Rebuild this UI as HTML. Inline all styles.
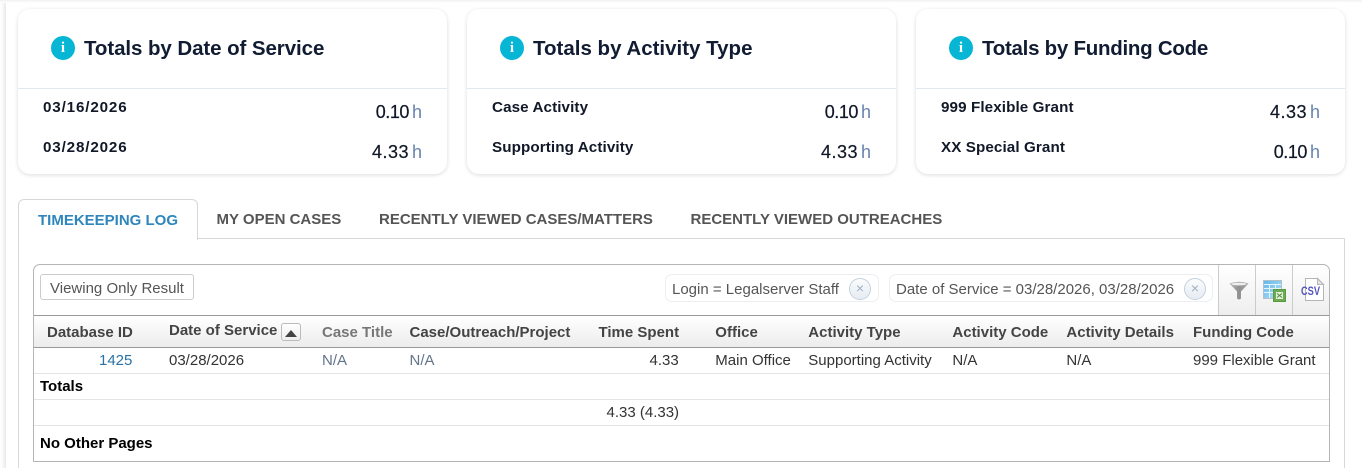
<!DOCTYPE html>
<html><head><meta charset="utf-8">
<style>
html,body{margin:0;padding:0;background:#fff;width:1362px;height:468px;overflow:hidden;}
body{position:relative;font-family:"Liberation Sans",sans-serif;}
.a{position:absolute;white-space:nowrap;}
.card{position:absolute;top:9px;width:429px;height:165px;background:#fff;border-radius:12px;box-shadow:0 1px 4px rgba(0,0,0,.14);}
.card .hr{position:absolute;left:0;right:0;top:79px;height:1px;background:#e2e8f0;}
.ic{position:absolute;left:33px;top:27px;width:24px;height:24px;border-radius:50%;background:#06b6d4;color:#fff;font:bold 15px/24px "Liberation Serif",serif;text-align:center;}
.t{position:absolute;left:66px;top:28px;font-size:20.5px;line-height:24px;font-weight:bold;color:#111c33;white-space:nowrap;}
.l{position:absolute;left:25px;font-size:15.2px;line-height:18px;font-weight:bold;color:#111827;white-space:nowrap;letter-spacing:.1px;}
.l.d{letter-spacing:.85px;}
.v{position:absolute;right:25px;font-size:18px;line-height:22px;color:#111827;white-space:nowrap;-webkit-text-stroke:.2px #111827;}
.v.z{letter-spacing:-.45px;}
.v.f{letter-spacing:.5px;}
.v span{color:#6583ab;margin-left:3px;-webkit-text-stroke:0;letter-spacing:0;}
.tab{position:absolute;top:211px;font-size:15px;line-height:18px;font-weight:bold;color:#555;white-space:nowrap;}
.th{position:absolute;top:324px;font-size:15px;line-height:17px;font-weight:bold;color:#444;white-space:nowrap;}
.td{position:absolute;top:352px;font-size:15px;line-height:17px;color:#333;white-space:nowrap;}
.hl{position:absolute;left:34px;width:1295px;height:1px;background:#e4e4e4;}
.chip{position:absolute;top:274px;height:28px;background:#fff;border:1px solid #eceef1;border-radius:7px;box-sizing:border-box;font-size:15px;line-height:28px;color:#555;padding-left:6px;white-space:nowrap;}
.chip b{font-weight:normal;position:relative;top:1px;}
.x{position:absolute;top:3px;width:20px;height:20px;border:1px solid #c3d1de;background:linear-gradient(180deg,#fbfcfd,#e6ecf2);border-radius:50%;color:#9db0c3;font-size:14px;line-height:19px;text-align:center;}
.tool{position:absolute;top:265px;width:1px;height:50px;background:#ccc;}
</style></head>
<body>
<div class="a" style="left:0;top:0;width:6px;height:468px;background:linear-gradient(90deg,#fff 0,#f8f8f8 3px,#e8e8e8 6px);"></div>
<div class="a" style="left:0;top:0;width:1362px;height:3px;background:linear-gradient(180deg,#f1f1f1,#fff);"></div>

<div class="card" style="left:18px;">
  <div class="ic">i</div><div class="t" style="letter-spacing:-.08px;">Totals by Date of Service</div><div class="hr"></div>
  <div class="l d" style="top:90px;">03/16/2026</div><div class="v z" style="top:92px;">0.10<span>h</span></div>
  <div class="l d" style="top:130px;">03/28/2026</div><div class="v f" style="top:132px;">4.33<span>h</span></div>
</div>
<div class="card" style="left:467px;">
  <div class="ic">i</div><div class="t">Totals by Activity Type</div><div class="hr"></div>
  <div class="l" style="top:90px;">Case Activity</div><div class="v z" style="top:92px;">0.10<span>h</span></div>
  <div class="l" style="top:130px;">Supporting Activity</div><div class="v f" style="top:132px;">4.33<span>h</span></div>
</div>
<div class="card" style="left:916px;">
  <div class="ic">i</div><div class="t" style="letter-spacing:-.27px;">Totals by Funding Code</div><div class="hr"></div>
  <div class="l" style="top:90px;">999 Flexible Grant</div><div class="v f" style="top:92px;">4.33<span>h</span></div>
  <div class="l" style="top:130px;">XX Special Grant</div><div class="v z" style="top:132px;">0.10<span>h</span></div>
</div>

<!-- tab panel -->
<div class="a" style="left:18px;top:238px;width:1327px;height:230px;border:1px solid #d8d8d8;border-bottom:none;box-sizing:border-box;"></div>
<div class="a" style="left:18px;top:199px;width:180px;height:41px;background:#fff;border:1px solid #d8d8d8;border-bottom:none;border-radius:6px 6px 0 0;box-sizing:border-box;"></div>
<div class="tab" style="left:38px;color:#2e86bd;top:212px;">TIMEKEEPING LOG</div>
<div class="tab" style="left:216.500px;">MY OPEN CASES</div>
<div class="tab" style="left:379px;">RECENTLY VIEWED CASES/MATTERS</div>
<div class="tab" style="left:690.500px;">RECENTLY VIEWED OUTREACHES</div>

<!-- table box -->
<div class="a" style="left:33px;top:264px;width:1297px;height:198px;border:1px solid #b5b5b5;border-radius:7px 7px 0 0;box-sizing:border-box;"></div>
<div class="a" style="left:40px;top:274px;width:154px;height:26px;border:1px solid #ccc;border-radius:3px;box-sizing:border-box;font-size:15px;line-height:26px;color:#555;text-align:center;"><span style="position:relative;top:1px;">Viewing Only Result</span></div>

<div class="chip" style="left:665px;width:214px;"><b>Login = Legalserver Staff</b><div class="x" style="left:183px;">×</div></div>
<div class="chip" style="left:889px;width:324px;"><b>Date of Service = 03/28/2026, 03/28/2026</b><div class="x" style="left:294px;">×</div></div>

<!-- toolbar -->
<div class="a" style="left:1219px;top:265px;width:110px;height:50px;background:linear-gradient(180deg,#fff,#eee);border-radius:0 7px 0 0;"></div>
<div class="tool" style="left:1218px;"></div><div class="tool" style="left:1255px;"></div><div class="tool" style="left:1292px;"></div>
<svg class="a" style="left:1229px;top:281px;" width="20" height="19" viewBox="0 0 20 19">
  <defs><linearGradient id="fg" x1="0" x2="1" y1="0" y2="0"><stop offset="0" stop-color="#bdbdbd"/><stop offset=".5" stop-color="#8f8f8f"/><stop offset="1" stop-color="#ababab"/></linearGradient></defs>
  <path d="M.5 2.500Q10 -1 19.500 2.500L12 10.500V17.500Q10 19.500 8 17.500V10.500Z" fill="url(#fg)"/>
  <ellipse cx="10" cy="3" rx="7.500" ry="1.500" fill="#ededed"/>
</svg>
<svg class="a" style="left:1263px;top:280px;" width="23" height="22" viewBox="0 0 23 22">
  <defs><linearGradient id="xg" x1="0" x2="1" y1="0" y2="1"><stop offset="0" stop-color="#5fb8ea"/><stop offset="1" stop-color="#b9e1f7"/></linearGradient></defs>
  <rect x=".5" y=".5" width="18" height="18" fill="url(#xg)" stroke="#b3bfc6"/>
  <path d="M1 4.500h17M1 8.500h17M1 12.500h17M6.500 4v14M12.500 4v14" stroke="#e6f4fc"/>
  <rect x="10.500" y="9.500" width="12" height="12" fill="#6cab52" stroke="#5a9a42"/>
  <rect x="13" y="12" width="7" height="7" fill="#e2efd9"/><path d="M14 13.500l5 4M19 13.500l-5 4" stroke="#4f8a3a"/>
</svg>
<svg class="a" style="left:1300px;top:277px;" width="26" height="26" viewBox="0 0 26 26">
  <path d="M5.500 1.500h12l6 6v16h-18z" fill="#fff" stroke="#b5b5b5"/><path d="M17.500 1.500v6h6z" fill="#e4e4e4" stroke="#b5b5b5"/>
  <text x="1" y="18" font-family="Liberation Sans" font-size="12" font-weight="bold" fill="#5454bb" textLength="19" lengthAdjust="spacingAndGlyphs">CSV</text>
</svg>

<!-- header -->
<div class="a" style="left:34px;top:315px;width:1295px;height:33px;border-top:1px solid #999;border-bottom:1px solid #999;box-sizing:border-box;background:linear-gradient(180deg,#fff,#ececec);"></div>
<div class="th" style="left:47px;">Database ID</div>
<div class="th" style="left:169px;top:322px;">Date of Service</div>
<div class="a" style="left:281px;top:323px;width:20px;height:18px;border:1px solid #bbb;border-radius:3px;box-sizing:border-box;background:linear-gradient(180deg,#fff,#eee);"></div>
<div class="a" style="left:285px;top:330px;width:0;height:0;border-left:6px solid transparent;border-right:6px solid transparent;border-bottom:7px solid #444;"></div>
<div class="th" style="left:322px;color:#777;">Case Title</div>
<div class="th" style="left:409.500px;">Case/Outreach/Project</div>
<div class="th" style="left:598.500px;">Time Spent</div>
<div class="th" style="left:715.300px;">Office</div>
<div class="th" style="left:808.300px;">Activity Type</div>
<div class="th" style="left:952.400px;">Activity Code</div>
<div class="th" style="left:1066.400px;">Activity Details</div>
<div class="th" style="left:1193px;">Funding Code</div>

<!-- row -->
<div class="td" style="left:99px;color:#2a73a6;">1425</div>
<div class="td" style="left:169px;">03/28/2026</div>
<div class="td" style="left:322px;color:#64748b;">N/A</div>
<div class="td" style="left:409.500px;color:#64748b;">N/A</div>
<div class="td" style="left:649.500px;">4.33</div>
<div class="td" style="left:715.300px;">Main Office</div>
<div class="td" style="left:808.300px;">Supporting Activity</div>
<div class="td" style="left:952.400px;">N/A</div>
<div class="td" style="left:1066.400px;">N/A</div>
<div class="td" style="left:1193px;">999 Flexible Grant</div>

<div class="hl" style="top:373px;"></div>
<div class="a" style="left:40px;top:378px;font-size:15px;line-height:17px;font-weight:bold;color:#000;">Totals</div>
<div class="hl" style="top:399px;"></div>
<div class="a" style="left:606.500px;top:404px;font-size:15px;line-height:17px;color:#333;">4.33 (4.33)</div>
<div class="hl" style="top:425px;"></div>
<div class="a" style="left:40px;top:435px;font-size:15px;line-height:17px;font-weight:bold;color:#000;">No Other Pages</div>
</body></html>
